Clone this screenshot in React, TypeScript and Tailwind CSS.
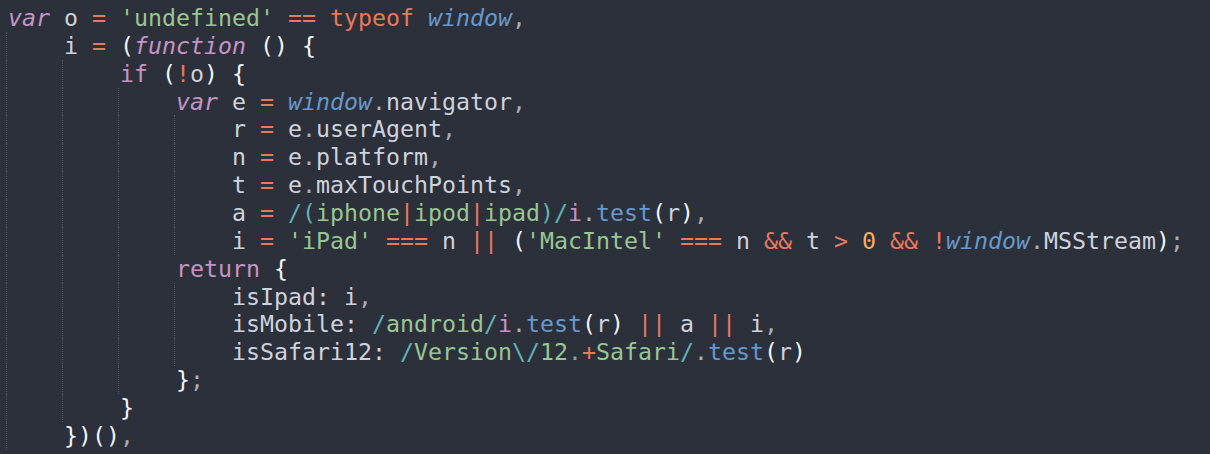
import React from "react";

type Tok = [string, string];

const C = {
  kw: "text-[#c594c5]",
  kwi: "text-[#c594c5] italic",
  op: "text-[#e8795c]",
  str: "text-[#99c794]",
  win: "text-[#6699cc] italic",
  fn: "text-[#6699cc]",
  rx: "text-[#5fb3b3]",
  num: "text-[#f9ae58]",
  id: "text-[#cdd3de]",
  br: "text-[#f2f4f8]",
  pn: "text-[#a7adba]",
};

const t = (s: string, c: keyof typeof C): Tok => [s, C[c]];
const sp: Tok = [" ", ""];

type Line = { guides: number; indent: number; toks: Tok[] };

const lines: Line[] = [
  {
    guides: 0,
    indent: 0,
    toks: [
      t("var", "kwi"), sp, t("o", "id"), sp, t("=", "op"), sp,
      t("'undefined'", "str"), sp, t("==", "op"), sp, t("typeof", "op"), sp,
      t("window", "win"), t(",", "pn"),
    ],
  },
  {
    guides: 1,
    indent: 1,
    toks: [
      t("i", "id"), sp, t("=", "op"), sp, t("(", "br"), t("function", "kwi"), sp,
      t("()", "br"), sp, t("{", "br"),
    ],
  },
  {
    guides: 2,
    indent: 2,
    toks: [t("if", "kw"), sp, t("(", "br"), t("!", "op"), t("o", "id"), t(")", "br"), sp, t("{", "br")],
  },
  {
    guides: 3,
    indent: 3,
    toks: [
      t("var", "kwi"), sp, t("e", "id"), sp, t("=", "op"), sp, t("window", "win"),
      t(".", "pn"), t("navigator", "id"), t(",", "pn"),
    ],
  },
  {
    guides: 4,
    indent: 4,
    toks: [t("r", "id"), sp, t("=", "op"), sp, t("e", "id"), t(".", "pn"), t("userAgent", "id"), t(",", "pn")],
  },
  {
    guides: 4,
    indent: 4,
    toks: [t("n", "id"), sp, t("=", "op"), sp, t("e", "id"), t(".", "pn"), t("platform", "id"), t(",", "pn")],
  },
  {
    guides: 4,
    indent: 4,
    toks: [t("t", "id"), sp, t("=", "op"), sp, t("e", "id"), t(".", "pn"), t("maxTouchPoints", "id"), t(",", "pn")],
  },
  {
    guides: 4,
    indent: 4,
    toks: [
      t("a", "id"), sp, t("=", "op"), sp, t("/(", "rx"), t("iphone", "str"), t("|", "op"),
      t("ipod", "str"), t("|", "op"), t("ipad", "str"), t(")/", "rx"), t("i", "kw"),
      t(".", "pn"), t("test", "fn"), t("(", "br"), t("r", "id"), t(")", "br"), t(",", "pn"),
    ],
  },
  {
    guides: 4,
    indent: 4,
    toks: [
      t("i", "id"), sp, t("=", "op"), sp, t("'iPad'", "str"), sp, t("===", "op"), sp,
      t("n", "id"), sp, t("||", "op"), sp, t("(", "br"), t("'MacIntel'", "str"), sp,
      t("===", "op"), sp, t("n", "id"), sp, t("&&", "op"), sp, t("t", "id"), sp,
      t(">", "op"), sp, t("0", "num"), sp, t("&&", "op"), sp, t("!", "op"),
      t("window", "win"), t(".", "pn"), t("MSStream", "id"), t(")", "br"), t(";", "pn"),
    ],
  },
  {
    guides: 3,
    indent: 3,
    toks: [t("return", "kw"), sp, t("{", "br")],
  },
  {
    guides: 4,
    indent: 4,
    toks: [t("isIpad:", "id"), sp, t("i", "id"), t(",", "pn")],
  },
  {
    guides: 4,
    indent: 4,
    toks: [
      t("isMobile:", "id"), sp, t("/", "rx"), t("android", "str"), t("/", "rx"), t("i", "kw"),
      t(".", "pn"), t("test", "fn"), t("(", "br"), t("r", "id"), t(")", "br"), sp,
      t("||", "op"), sp, t("a", "id"), sp, t("||", "op"), sp, t("i", "id"), t(",", "pn"),
    ],
  },
  {
    guides: 4,
    indent: 4,
    toks: [
      t("isSafari12:", "id"), sp, t("/", "rx"), t("Version", "str"), t("\\/", "rx"),
      t("12", "str"), t(".", "rx"), t("+", "op"), t("Safari", "str"), t("/", "rx"),
      t(".", "pn"), t("test", "fn"), t("(", "br"), t("r", "id"), t(")", "br"),
    ],
  },
  {
    guides: 3,
    indent: 3,
    toks: [t("}", "br"), t(";", "pn")],
  },
  {
    guides: 2,
    indent: 2,
    toks: [t("}", "br")],
  },
  {
    guides: 1,
    indent: 1,
    toks: [t("})()", "br"), t(",", "pn")],
  },
];

function Guide({ on }: { on: boolean }) {
  return (
    <span className="relative w-[4ch] shrink-0 self-stretch">
      {on && (
        <span className="absolute left-[-2px] top-0 bottom-0 border-l border-dotted border-[#4c5563]" />
      )}
    </span>
  );
}

export default function App() {
  return (
    <div
      className="w-[1210px] h-[454px] overflow-hidden bg-[#2b303b] pt-[4px] pl-[8px] text-[23.25px] leading-[27.87px]"
      style={{ fontFamily: '"DejaVu Sans Mono", "Liberation Mono", monospace' }}
    >
      {lines.map((ln, i) => (
        <div key={i} className="flex h-[27.87px] whitespace-pre">
          {Array.from({ length: ln.indent }).map((_, g) => (
            <Guide key={g} on={g < ln.guides} />
          ))}
          <span>
            {ln.toks.map(([s, c], k) => (
              <span key={k} className={c}>
                {s}
              </span>
            ))}
          </span>
        </div>
      ))}
    </div>
  );
}
